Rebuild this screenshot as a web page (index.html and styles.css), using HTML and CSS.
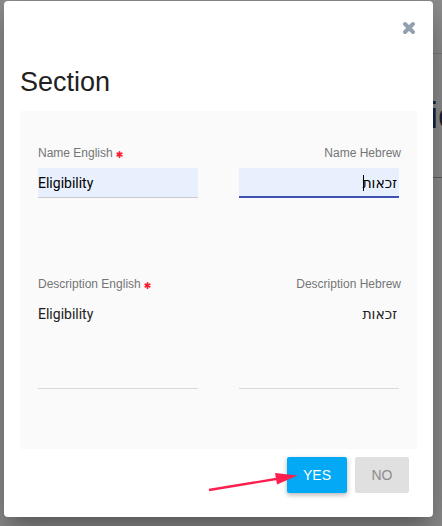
FILE: index.html
```html
<!DOCTYPE html>
<html lang="en">
<head>
<meta charset="utf-8">
<meta name="viewport" content="width=device-width, initial-scale=1">
<title>Section</title>
<link rel="stylesheet" href="styles.css">
</head>
<body>
<div class="page-behind" aria-hidden="true"><div class="page-bar"></div><div class="page-card"><span class="page-title">ie</span></div></div>
<main class="dialog" role="dialog" aria-labelledby="dialog-title">
  <header class="dialog-top">
    <button class="close" type="button" aria-label="Close">
      <svg viewBox="0 0 14 14" width="14" height="14"><path d="M3 3 11 11M11 3 3 11" fill="none" stroke="currentColor" stroke-width="4" stroke-linecap="round"/></svg>
    </button>
  </header>
  <h1 class="title" id="dialog-title">Section</h1>
  <form class="form">
    <div class="panel">
      <div class="field">
        <label class="label" for="name-en">Name English
          <svg class="required" viewBox="0 0 8 8" width="7" height="7"><path d="M4 1V7M1.4 2.5 6.6 5.5M6.6 2.5 1.4 5.5" stroke="currentColor" stroke-width="2" stroke-linecap="round"/></svg>
        </label>
        <input class="control filled" id="name-en" type="text" value="Eligibility">
      </div>
      <div class="field hebrew">
        <label class="label" for="name-he">Name Hebrew</label>
        <div class="control-wrap">
          <input class="control filled active" id="name-he" type="text" dir="rtl" value="זכאות">
          <span class="caret"></span>
        </div>
      </div>
      <div class="field">
        <label class="label" for="desc-en">Description English
          <svg class="required" viewBox="0 0 8 8" width="7" height="7"><path d="M4 1V7M1.4 2.5 6.6 5.5M6.6 2.5 1.4 5.5" stroke="currentColor" stroke-width="2" stroke-linecap="round"/></svg>
        </label>
        <textarea class="control area" id="desc-en" rows="4">Eligibility</textarea>
      </div>
      <div class="field hebrew">
        <label class="label" for="desc-he">Description Hebrew</label>
        <textarea class="control area" id="desc-he" rows="4" dir="rtl">זכאות</textarea>
      </div>
    </div>
    <div class="actions">
      <button class="button yes" type="button">YES
        <svg class="pointer" viewBox="0 0 90 22" width="90" height="22"><path d="M1 19 71 7.5" stroke="#ff1f4f" stroke-width="2.4"/><path d="M67 2 89.500 4.500 69 13.500Z" fill="#ff1f4f"/></svg>
      </button>
      <button class="button no" type="button">NO</button>
    </div>
  </form>
</main>
</body>
</html>
```
FILE: styles.css
```css
* {
  box-sizing: border-box;
}

body {
  margin: 0;
  min-height: 100vh;
  padding: 1px 9px 9px 4px;
  background: #8e8e8e;
  font-family: "Liberation Sans", Arial, sans-serif;
  overflow: hidden;
}

.page-behind {
  position: absolute;
  inset: 0 0 0 50%;
}

.page-bar {
  height: 54px;
  border-bottom: 1px solid #7b7b7b;
}

.page-card {
  display: flex;
  align-items: center;
  justify-content: flex-end;
  height: 124px;
  overflow: hidden;
  border-bottom: 1px solid #626262;
}

.page-title {
  margin-right: -16px;
  font-size: 36px;
  color: #1c2238;
}

.dialog {
  position: relative;
  padding: 16px;
  background: #fff;
  border-radius: 4px;
  box-shadow: 0 11px 15px -7px rgba(0, 0, 0, .2), 0 24px 38px 3px rgba(0, 0, 0, .14), 0 9px 46px 8px rgba(0, 0, 0, .12);
}

.dialog-top {
  display: flex;
  justify-content: flex-end;
  height: 49px;
  padding: 4px 1px 0 0;
}

.close {
  display: flex;
  width: 14px;
  height: 14px;
  padding: 0;
  border: 0;
  background: none;
  color: #94a0ad;
}

.title {
  margin: 0;
  color: #212121;
  font-size: 27px;
  font-weight: 400;
  line-height: 32px;
}

.form {
  margin-top: 13px;
}

.panel {
  display: grid;
  grid-template-columns: 1fr 1fr;
  grid-template-rows: 131px 1fr;
  column-gap: 41px;
  height: 338px;
  padding: 34px 18px 0;
  background: #fafafa;
}

.field {
  display: flex;
  flex-direction: column;
  min-width: 0;
}

.label {
  display: flex;
  align-items: center;
  gap: 3px;
  margin-bottom: 7px;
  color: #757575;
  font-size: 12px;
  line-height: 16px;
  white-space: nowrap;
}

.required {
  margin-top: 2px;
  color: #fb1c2d;
}

.hebrew .label {
  justify-content: flex-end;
  margin-right: -2px;
}

.control-wrap {
  position: relative;
  display: flex;
}

.control {
  display: block;
  width: 100%;
  height: 30px;
  margin: 0;
  padding: 0;
  border: 0;
  border-bottom: 1px solid #c8cad4;
  border-radius: 0;
  outline: 0;
  background: transparent;
  color: #000;
  font-family: Roboto, "DejaVu Sans", sans-serif;
  font-size: 14px;
  line-height: 20px;
}

.hebrew .control {
  padding-right: 2px;
}

.filled {
  background: #e8f0fe;
}

.hebrew .active {
  padding-top: 1px;
  border-bottom: 2px solid #3f51b5;
}

.area {
  height: 90px;
  padding-top: 5px;
  border-color: #d9d9d9;
  color: #212121;
  resize: none;
}

.caret {
  position: absolute;
  top: 7px;
  right: 35px;
  width: 1px;
  height: 16px;
  background: #000;
}

.actions {
  display: flex;
  justify-content: flex-end;
  gap: 8px;
  padding: 8px 8px 8px 0;
}

.button {
  position: relative;
  height: 36px;
  min-width: 54px;
  padding: 0 16px;
  border: 0;
  border-radius: 2px;
  font-family: inherit;
  font-size: 14px;
}

.yes {
  background: #03a9f4;
  color: #fff;
  box-shadow: 0 2px 5px rgba(0, 0, 0, .3);
}

.no {
  background: #e0e0e0;
  color: #8c8c8c;
}

.pointer {
  position: absolute;
  top: 14px;
  right: 49px;
}
```
